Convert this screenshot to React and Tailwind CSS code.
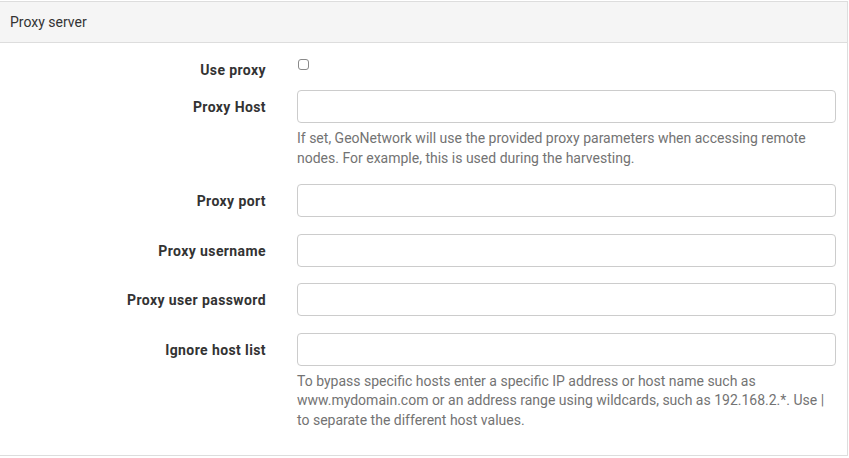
export default function App() {
  const rows = [
    { label: "Proxy port" },
    { label: "Proxy username" },
    { label: "Proxy user password" },
  ];
  return (
    <div className="w-[849px] h-[458px] bg-white pt-px" style={{ fontFamily: "Roboto, 'Liberation Sans', sans-serif" }}>
      <div className="w-[848px] h-[455px] border border-l-0 border-[#dddddd] text-[14px] text-[#333333]">
        <div className="h-[41px] bg-[#f5f5f5] border-b border-[#dddddd] pl-[10px] flex items-center leading-[20px]">
          Proxy server
        </div>
        <div className="pt-[14px]">
          {/* Use proxy */}
          <div className="flex h-[33px]">
            <div className="w-[266px] text-right font-bold leading-[20px] pt-[3px] tracking-[0.4px]">Use proxy</div>
            <div className="ml-[32px] pt-[2px]">
              <input type="checkbox" className="appearance-none w-[11px] h-[11px] m-0 block border border-[#8a8a8a] rounded-[3px] bg-white" />
            </div>
          </div>
          {/* Proxy Host */}
          <div className="flex">
            <div className="w-[266px] text-right font-bold leading-[20px] pt-[7px] tracking-[0.4px]">Proxy Host</div>
            <div className="ml-[31px] w-[539px]">
              <div className="h-[33px] border border-[#cccccc] rounded-[4px] bg-white" />
              <div className="mt-[6px] leading-[19.5px] text-[#737373] pr-[30px]">
                If set, GeoNetwork will use the provided proxy parameters when accessing remote nodes. For example, this is used during the harvesting.
              </div>
            </div>
          </div>
          {rows.map((r, i) => (
            <div key={r.label} className={i === 0 ? "flex mt-[16px]" : "flex mt-[16.5px]"}>
              <div className="w-[266px] text-right font-bold leading-[20px] pt-[7px] tracking-[0.4px]">{r.label}</div>
              <div className="ml-[31px] w-[539px]">
                <div className="h-[33px] border border-[#cccccc] rounded-[4px] bg-white" />
              </div>
            </div>
          ))}
          <div className="flex mt-[16.5px]">
            <div className="w-[266px] text-right font-bold leading-[20px] pt-[7px] tracking-[0.4px]">Ignore host list</div>
            <div className="ml-[31px] w-[539px]">
              <div className="h-[33px] border border-[#cccccc] rounded-[4px] bg-white" />
              <div className="mt-[6px] leading-[19.5px] text-[#737373] pr-[4px]">
                To bypass specific hosts enter a specific IP address or host name such as www.mydomain.com or an address range using wildcards, such as 192.168.2.*. Use | to separate the different host values.
              </div>
            </div>
          </div>
        </div>
      </div>
    </div>
  );
}
